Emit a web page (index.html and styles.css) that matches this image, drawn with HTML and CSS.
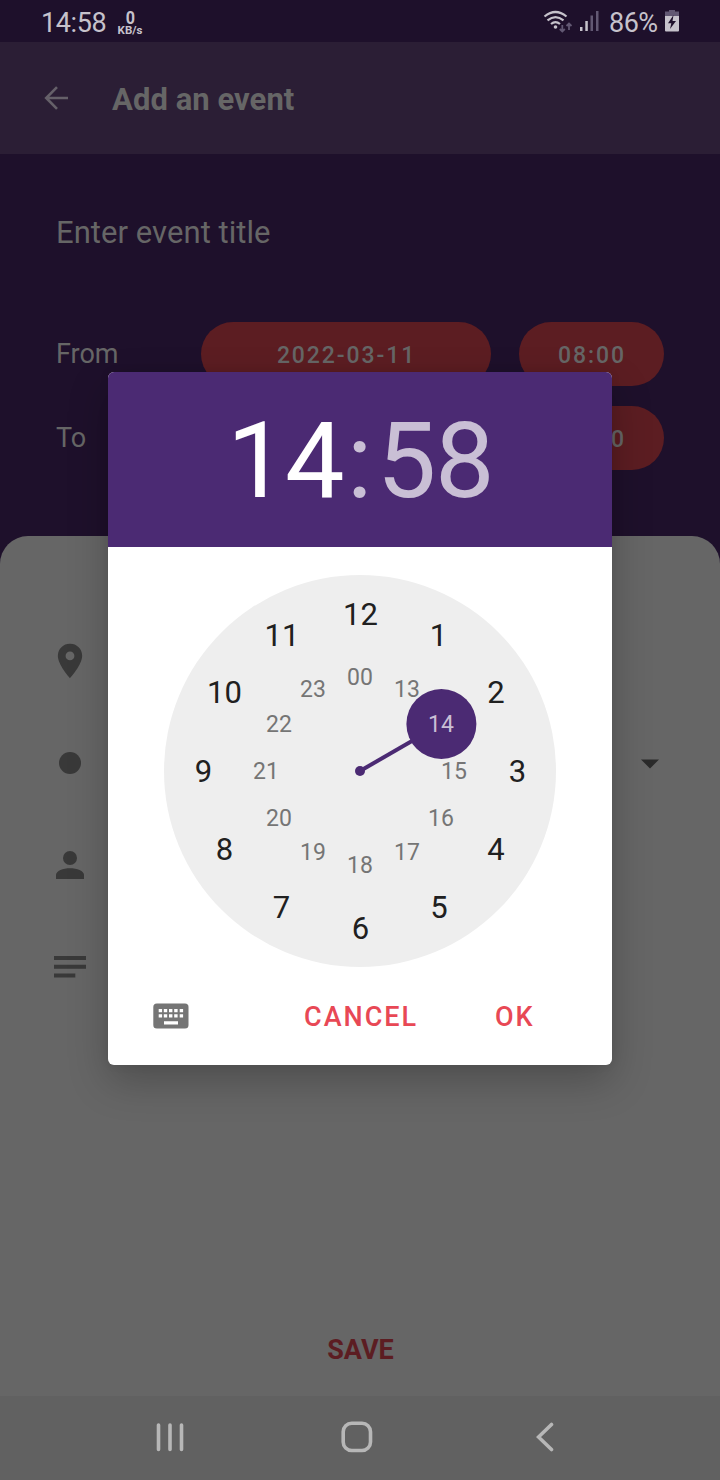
FILE: index.html
```html
<!DOCTYPE html>
<html lang="en">
<head>
<meta charset="utf-8">
<title>Add an event</title>
<link rel="stylesheet" href="styles.css">
</head>
<body>
<div class="screen">
  <header class="status">
    <span class="status-time">14:58</span>
    <span class="speed"><b class="speed-value">0</b><b class="speed-unit">KB/s</b></span>
    <svg class="wifi" width="30" height="24" viewBox="0 0 30 24" fill="none" stroke="#c6c2cb" stroke-width="2.2">
      <path d="M1.5 6.5Q12.5-2.5 23.5 6.5M4.5 10.3Q12.5 3.8 20.5 10.3M8 14Q12.5 10.2 17 14"/>
      <circle cx="12.5" cy="17" r="1.8" fill="#c6c2cb" stroke="none"/>
      <path d="M19.3 15v6.500M16.800 19l2.500 2.500 2.500-2.500M26 20v-6.500M23.500 16l2.500-2.500 2.500 2.500" stroke="#625873" stroke-width="1.8"/>
    </svg>
    <svg class="signal" width="20" height="22" viewBox="0 0 20 22">
      <path d="M0 17h2.500v4H0zM5.300 11h2.500v10H5.300z" fill="#c6c2cb"/>
      <path d="M10.500 5.500H13V21h-2.500zM16 1h2.500v20H16z" fill="#625873"/>
    </svg>
    <span class="status-battery">86%</span>
    <svg class="battery" width="14" height="22" viewBox="0 0 14 22">
      <path d="M4 0h6v1.500h4V6H0V1.500h4z" fill="#625873"/>
      <path d="M0 6h14v14.500a1 1 0 0 1-1 1H1a1 1 0 0 1-1-1z" fill="#c6c2cb"/>
      <path d="M8.500 5 3 13.300h3.300L5 19l6-8H7.500z" fill="#1e102b"/>
    </svg>
  </header>

  <div class="appbar">
    <svg class="back" width="24" height="24" viewBox="0 0 24 24" fill="none" stroke="#656069" stroke-width="2.600">
      <path d="M24 12H2.200M13 1.200 2.200 12 13 22.800"/>
    </svg>
    <h1 class="appbar-title">Add an event</h1>
  </div>

  <section class="form">
    <div class="event-title">Enter event title</div>
    <div class="when">
      <span class="when-label">From</span>
      <span class="pill pill-date">2022-03-11</span>
      <span class="pill pill-time">08:00</span>
    </div>
    <div class="when">
      <span class="when-label">To</span>
      <span class="pill pill-date"></span>
      <span class="pill pill-time">09:00</span>
    </div>
  </section>

  <main class="sheet">
    <div class="detail">
      <svg width="40" height="40" viewBox="0 0 24 24" fill="#393939"><path d="M12 1.700A7.200 7.200 0 0 0 4.700 8.900C4.700 14.400 12 22.300 12 22.300s7.300-7.900 7.300-13.400A7.200 7.200 0 0 0 12 1.700zm0 9.900a2.650 2.650 0 1 1 0-5.300 2.650 2.650 0 0 1 0 5.300z"/></svg>
    </div>
    <div class="detail">
      <svg width="40" height="40" viewBox="0 0 40 40" fill="#393939"><circle cx="20" cy="20" r="11"/></svg>
      <svg class="caret" width="18" height="10" viewBox="0 0 18 10" fill="#2b2b2b"><path d="M0 .500h18L9 9.500z"/></svg>
    </div>
    <div class="detail">
      <svg width="40" height="40" viewBox="0 0 40 40" fill="#393939"><circle cx="20" cy="13" r="7"/><path d="M6 34v-4c0-4 7-6.700 14-6.700S34 26 34 30v4z"/></svg>
    </div>
    <div class="detail">
      <svg width="40" height="40" viewBox="0 0 40 40" fill="#393939"><path d="M4 9h32v4H4zM4 17.700h32v4H4zM4 26.500h21.300v4H4z"/></svg>
    </div>
    <div class="save">SAVE</div>
  </main>

  <nav class="navbar">
    <svg class="nav-recents" width="28" height="30" viewBox="0 0 28 30" stroke="#b7b7b7" stroke-width="3.600" stroke-linecap="round"><path d="M2.500 3v24.500M14 3v24.500M25.500 3v24.500"/></svg>
    <svg class="nav-home" width="32" height="32" viewBox="0 0 32 32" fill="none" stroke="#b7b7b7" stroke-width="3.600"><rect x="2.200" y="2.200" width="27.300" height="27.300" rx="8.500"/></svg>
    <svg class="nav-back" width="18" height="30" viewBox="0 0 18 30" fill="none" stroke="#b7b7b7" stroke-width="3.600" stroke-linecap="round"><path d="M15.500 2.500 2.500 15l13 12.500"/></svg>
  </nav>

  <div class="dialog">
    <div class="clock-head"><span class="hour">14</span><span class="colon">:</span><span>58</span></div>
    <svg class="dial" width="392" height="392" viewBox="-196 -196 392 392">
      <circle r="196" fill="#eee"/>
      <g class="inner">
        <text x="0" y="-86">00</text><text x="47" y="-74">13</text>
        <text x="94" y="8">15</text><text x="81" y="55">16</text><text x="47" y="89">17</text>
        <text x="0" y="102">18</text><text x="-47" y="89">19</text><text x="-81" y="55">20</text>
        <text x="-94" y="8">21</text><text x="-81" y="-39">22</text><text x="-47" y="-74">23</text>
      </g>
      <g fill="#4b2a73">
        <circle r="5"/>
        <path d="M0 0 81.400-47" stroke="#4b2a73" stroke-width="4"/>
        <circle cx="81.400" cy="-47" r="35"/>
      </g>
      <text class="picked" x="81" y="-39">14</text>
      <g class="outer">
        <text x="0.500" y="-146">12</text><text x="78.500" y="-125">1</text><text x="136" y="-68">2</text>
        <text x="157.500" y="10.500">3</text><text x="136" y="89">4</text><text x="79" y="147">5</text>
        <text x="0.500" y="168">6</text><text x="-78.500" y="147">7</text><text x="-135.500" y="89">8</text>
        <text x="-156.500" y="10.500">9</text><text x="-135.500" y="-68">10</text><text x="-78" y="-125">11</text>
      </g>
    </svg>
    <div class="actions">
      <svg class="keyboard" width="36" height="26" viewBox="0 0 36 26"><rect x=".300" y=".500" width="35.200" height="25" rx="3.500" fill="#757575"/><path fill="#fff" d="M5.700 6h3.400v3.200H5.700zM10.800 6h3.400v3.200h-3.400zM16 6h3.400v3.200H16zM21.200 6h3.400v3.200h-3.400zM26.700 6h3.400v3.200h-3.400zM5.700 11.200h3.400v3.300H5.700zM10.800 11.200h3.400v3.300h-3.400zM16 11.200h3.400v3.300H16zM21.200 11.200h3.400v3.300h-3.400zM26.700 11.200h3.400v3.300h-3.400zM11 18.200h14v3.300H11z"/></svg>
      <span class="cancel">CANCEL</span>
      <span class="ok">OK</span>
    </div>
  </div>
</div>
</body>
</html>
```
FILE: styles.css
```css
* { box-sizing: border-box; }
body { margin: 0; font-family: Roboto, sans-serif; background: #1e102b; }
svg { display: block; flex: none; }
.screen { position: relative; width: 720px; height: 1480px; overflow: hidden; display: flex; flex-direction: column; background: #1e102b; }

.status { height: 42px; padding: 0 41px 0 41px; display: flex; align-items: center; color: #c6c2cb; font-size: 27px; line-height: 42px; }
.status-time { width: 76px; padding-top: 3px; letter-spacing: -0.4px; }
.speed { display: flex; flex-direction: column; align-items: center; width: 26px; margin-right: auto; padding-top: 3px; }
.speed-value { font-size: 19px; line-height: 15px; transform: scaleX(.85); }
.speed-unit { font-size: 11.5px; line-height: 11px; }
.wifi { margin: 1px 1px 0 -1px; }
.signal { margin: 0 9px 0 6px; }
.status-battery { width: 56px; padding-top: 3px; white-space: nowrap; letter-spacing: -0.5px; }

.appbar { height: 112px; padding-left: 44px; display: flex; align-items: center; background: #2b1e35; }
.appbar-title { margin: 3px 0 0 44px; font-size: 31px; font-weight: 700; color: #666; letter-spacing: 0.05px; }

.form { height: 382px; padding: 57px 56px 0; color: #666; display: flex; flex-direction: column; }
.event-title { height: 44px; margin-bottom: 67px; font-size: 31px; line-height: 44px; letter-spacing: 0.05px; }
.when { display: flex; align-items: center; height: 64px; margin-bottom: 20px; }
.when-label { width: 145px; font-size: 27px; }
.pill { height: 64px; border-radius: 32px; background: #5c1d22; font-size: 23px; font-weight: 500; line-height: 67px; letter-spacing: 1.9px; text-indent: 1px; text-align: center; }
.pill-date { width: 290px; margin-right: 28px; }
.pill-time { width: 145px; }

.sheet { height: 860px; background: #666; border-radius: 28px 28px 0 0; padding: 74px 61px 0 50px; display: flex; flex-direction: column; }
.detail { display: flex; align-items: center; justify-content: space-between; height: 102px; }
.caret { margin-top: 2px; }
.save { margin: auto 0 28px 12px; text-align: center; font-size: 27px; font-weight: 700; line-height: 36px; color: #5c1d22; }

.navbar { height: 84px; background: #616161; display: flex; align-items: center; padding-left: 156px; }
.nav-recents { margin-top: -3px; }
.nav-home { margin: -2px 0 0 157px; }
.nav-back { margin: -2px 0 0 163px; }

.dialog { position: absolute; left: 108px; top: 372px; width: 504px; height: 693px; border-radius: 6px; overflow: hidden; background: #fff; box-shadow: 0 16px 40px rgba(0,0,0,.24), 0 0 10px rgba(0,0,0,.08); display: flex; flex-direction: column; align-items: center; }
.clock-head { align-self: stretch; height: 175px; display: flex; justify-content: center; background: #4b2a73; color: #c9bfd5; font-size: 106px; line-height: 179px; letter-spacing: -1.5px; }
.hour { color: #fff; }
.colon { margin: 0 6px 0 3.5px; }
.dial { margin-top: 28px; }
.inner, .picked { font-size: 23px; text-anchor: middle; fill: #757575; }
.picked { fill: #c9bfd5; }
.outer { font-size: 31px; text-anchor: middle; fill: #202020; }
.actions { align-self: stretch; height: 98px; display: flex; align-items: center; padding-left: 45px; color: #e84855; font-size: 27px; font-weight: 500; letter-spacing: 2px; }
.cancel { margin-left: 115px; width: 191px; padding-top: 1px; }
.ok { padding-top: 1px; }
```
